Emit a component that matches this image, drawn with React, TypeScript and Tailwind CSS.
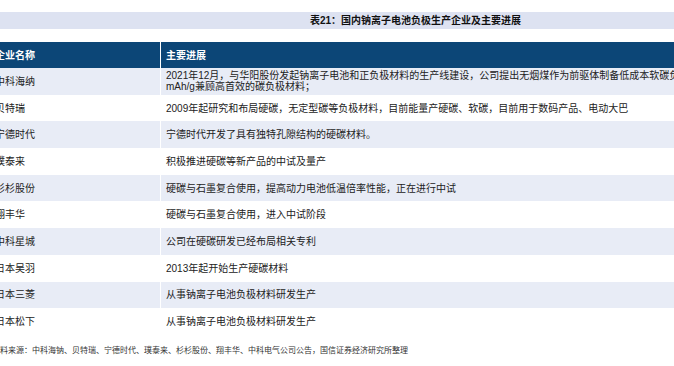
const rows: { name: string; progress: string[] }[] = [
  {
    name: '中科海纳',
    progress: [
      '2021年12月，与华阳股份发起钠离子电池和正负极材料的生产线建设，公司提出无烟煤作为前驱体制备低成本软碳负极材料，',
      'mAh/g兼顾高首效的碳负极材料；',
    ],
  },
  { name: '贝特瑞', progress: ['2009年起研究和布局硬碳，无定型碳等负极材料，目前能量产硬碳、软碳，目前用于数码产品、电动大巴'] },
  { name: '宁德时代', progress: ['宁德时代开发了具有独特孔隙结构的硬碳材料。'] },
  { name: '璞泰来', progress: ['积极推进硬碳等新产品的中试及量产'] },
  { name: '杉杉股份', progress: ['硬碳与石墨复合使用，提高动力电池低温倍率性能，正在进行中试'] },
  { name: '翔丰华', progress: ['硬碳与石墨复合使用，进入中试阶段'] },
  { name: '中科星城', progress: ['公司在硬碳研发已经布局相关专利'] },
  { name: '日本吴羽', progress: ['2013年起开始生产硬碳材料'] },
  { name: '日本三菱', progress: ['从事钠离子电池负极材料研发生产'] },
  { name: '日本松下', progress: ['从事钠离子电池负极材料研发生产'] },
];

export default function App() {
  return (
    <div
      className="w-[674px] h-[366px] overflow-hidden bg-white text-[#222]"
      style={{ fontFamily: '"Liberation Sans", "Noto Sans CJK SC", sans-serif' }}
    >
      {/* Title band */}
      <div className="mt-[12px] h-[17px] bg-[#dde2f1] flex items-center pl-[310px] text-[10px] font-bold text-[#111] whitespace-nowrap">
        表21：国内钠离子电池负极生产企业及主要进展
      </div>

      {/* Table */}
      <div className="mt-[13px] ml-[-5px] w-[700px]">
        <div className="flex h-[26px] bg-[#0c4677] text-white text-[10px] font-bold">
          <div className="w-[166px] shrink-0 flex items-center border-r border-white">企业名称</div>
          <div className="flex items-center pl-[5px]">主要进展</div>
        </div>
        {rows.map((r, i) => (
          <div key={r.name} className={`flex h-[26.7px] text-[10px] ${i % 2 === 0 ? 'bg-[#e8ecf6]' : 'bg-white'}`}>
            <div className="w-[166px] shrink-0 flex items-center border-r border-white">{r.name}</div>
            <div className="flex flex-col justify-center pl-[5px] leading-[11px] whitespace-nowrap">
              {r.progress.map((p) => (
                <span key={p}>{p}</span>
              ))}
            </div>
          </div>
        ))}
      </div>

      {/* Source */}
      <div className="mt-[11px] ml-[-8px] text-[8px] leading-[10px] text-[#333] whitespace-nowrap">
        资料来源：中科海钠、贝特瑞、宁德时代、璞泰来、杉杉股份、翔丰华、中科电气公司公告，国信证券经济研究所整理
      </div>
    </div>
  );
}
